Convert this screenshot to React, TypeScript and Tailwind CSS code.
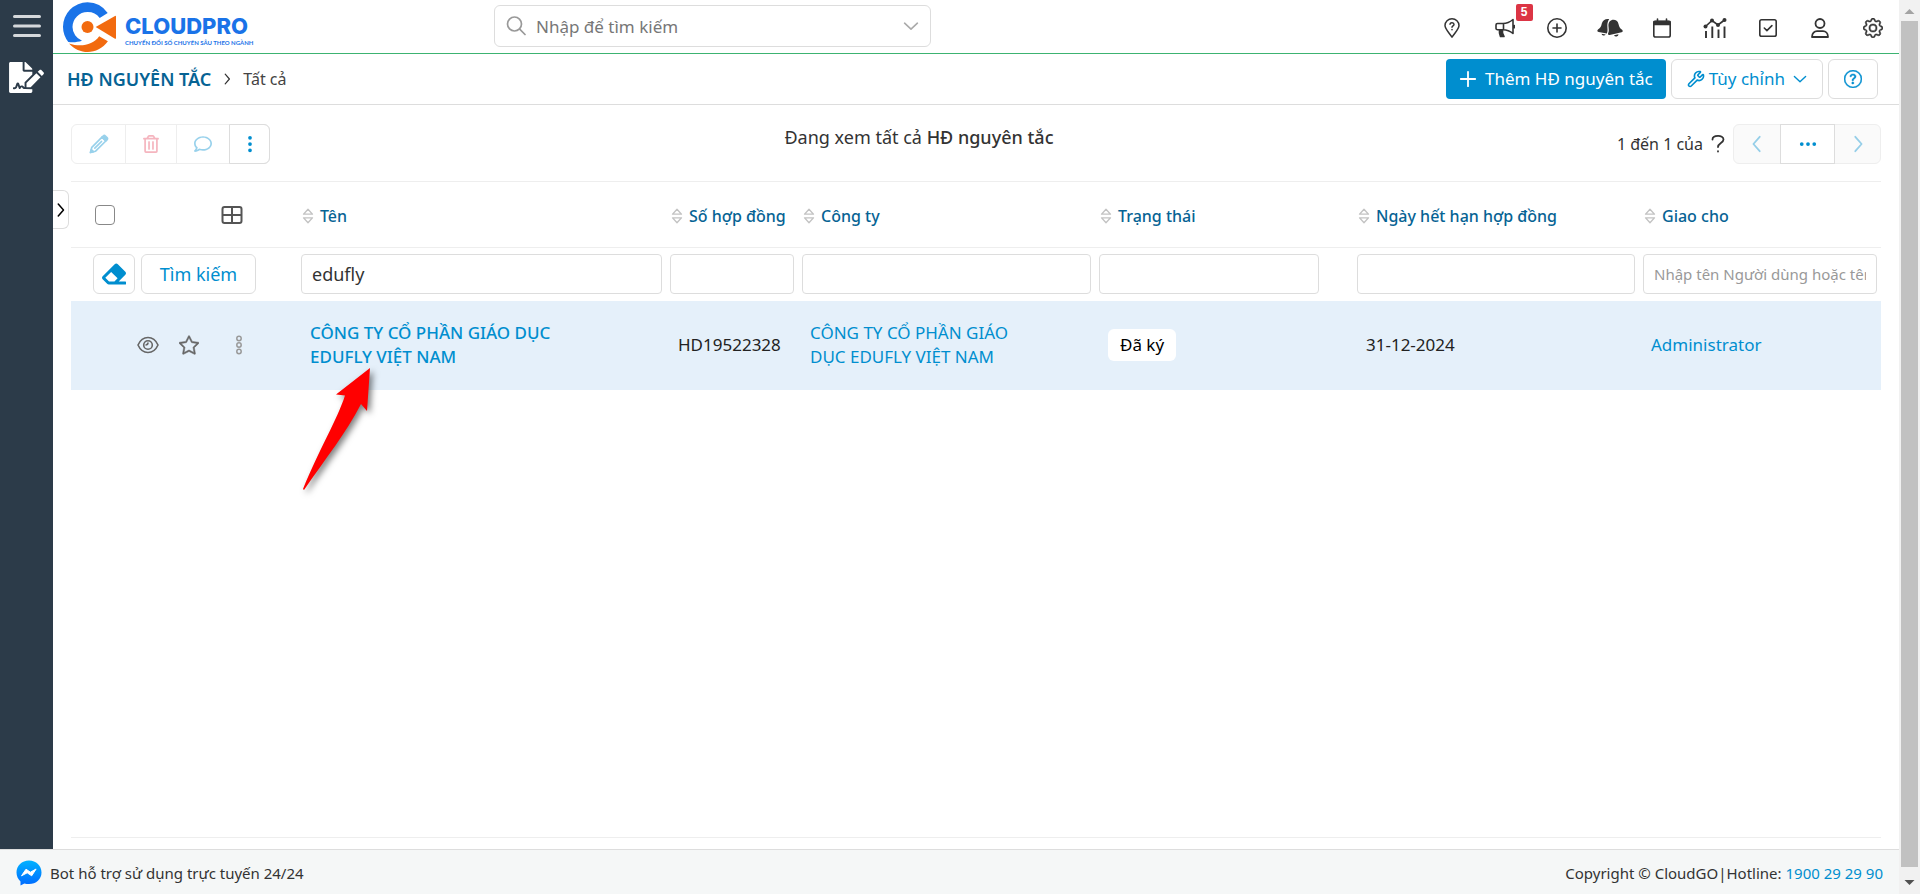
import type { ReactNode } from 'react';
import { Wrench } from 'lucide-react';
import { BsGear, BsQuestionCircle, BsStar, BsThreeDots, BsThreeDotsVertical } from 'react-icons/bs';
import { FaEraser, FaFileSignature, FaRegComment, FaRegTrashAlt } from 'react-icons/fa';

type StrokeIconProps = {
  children: ReactNode;
  className?: string;
  width?: number;
};

function StrokeIcon({ children, className = 'size-5', width = 1.6 }: StrokeIconProps) {
  return (
    <svg
      viewBox="0 0 20 20"
      className={className}
      fill="none"
      stroke="currentColor"
      strokeWidth={width}
      strokeLinecap="round"
      strokeLinejoin="round"
      aria-hidden="true"
    >
      {children}
    </svg>
  );
}

function Chevron({ direction, className = 'size-5' }: { direction: 'left' | 'right' | 'down'; className?: string }) {
  const paths = {
    left: 'M13 2 6 10 13 18',
    right: 'M7 2 14 10 7 18',
    down: 'M2 6.500 10 14 18 6.500',
  };
  return (
    <StrokeIcon className={className} width={2}>
      <path d={paths[direction]} />
    </StrokeIcon>
  );
}

function LogoMark() {
  return (
    <svg viewBox="0 0 54 52" className="h-[52px] w-[54px]" aria-hidden="true">
      <path
        d="M44.700 12A24.700 24.700 0 0 0 24.500 1.200A24.700 24.700 0 0 0 0 26A24.500 24.500 0 0 0 5.300 40.900C10 41.700 14 41.300 19 39.800A15 15 0 0 1 9.500 26A15 15 0 0 1 24.500 11A15 15 0 0 1 36.700 16.900Z"
        fill="#1a73e8"
      />
      <path d="M6 42.500C18 46.500 30 44 36.200 35.200L44.900 40.300C35 54 17 54.500 6 42.500Z" fill="#f26a0f" />
      <circle cx="24.500" cy="26" r="6" fill="#f26a0f" />
      <path d="M32.700 26 52 14.900Q53 14.500 53 15.700V37Q53 38.200 52 37.700Z" fill="#f26a0f" />
    </svg>
  );
}

function PinQuestion() {
  return (
    <StrokeIcon width={1.5}>
      <path d="M10 19.200C7 14.500 3 11 3 7.500a7 6.700 0 0 1 14 0C17 11 13 14.500 10 19.200Z" />
      <path d="M8 6.200c.3-2 4-1.800 4 .2 0 1.400-2 1.500-2 2.800M10 11.500v.2" />
    </StrokeIcon>
  );
}

function Bullhorn() {
  return (
    <StrokeIcon width={1.6}>
      <path d="M18 1.500V15.500C14.500 12.500 11.500 11.700 8 11.700H2.500A1.500 1.500 0 0 1 1 10.200V7A1.500 1.500 0 0 1 2.500 5.500H8C11.500 5.500 14.500 4.500 18 1.500ZM8.500 5.500V11.700M19.300 7.500V9.700" />
      <path d="M4.500 12H7.500V15L9 18.500H5.500L4.500 15Z" fill="currentColor" />
    </StrokeIcon>
  );
}

function CirclePlus() {
  return (
    <StrokeIcon width={1.6}>
      <circle cx="10" cy="10" r="9.200" />
      <path d="M10 6v8M6 10h8" />
    </StrokeIcon>
  );
}

function Bells() {
  return (
    <svg viewBox="0 0 26 20" className="h-5 w-[26px]" fill="currentColor" aria-hidden="true">
      <path d="M12.200 1.100C8.700.4 5.500 2.200 4.800 5.600 4.200 8.500 3.500 9.800 1 11.500c-1.200 1.200-.6 2.400.6 2.600l8.300 1.400C11.800 11 8.500 7 12.200 1.100Z" />
      <path d="M12.600 3.500c2.900-3 8-1.800 8.900 2.400.7 3 1.500 4.300 3.600 5.800 1.100 1.100.7 2.300-.5 2.600L12.700 17c-1.400.2-2.100-1-1.400-2.300 1.600-3.600-1.400-7 1.300-11.200Z" />
      <path d="M4.500 15.800 8.700 16.500A2.300 2.300 0 0 1 4.500 15.800ZM17 17.300 21.500 16.200A2.400 2.400 0 0 1 17 17.300Z" />
    </svg>
  );
}

function Calendar() {
  return (
    <StrokeIcon width={1.6}>
      <rect x="1.800" y="3.200" width="16.400" height="15.800" rx="1.800" />
      <path d="M2 3.500H18V6.500H2ZM5.500 1V3.500M14.500 1V3.500" fill="currentColor" />
    </StrokeIcon>
  );
}

function ChartLine() {
  return (
    <svg viewBox="0 0 24 20" className="h-5 w-6" fill="none" stroke="currentColor" strokeWidth="1.7" aria-hidden="true">
      <path d="m2.500 8.500 6.500-6 6 4.500 6.500-5" />
      <path d="M3 13v7M9.300 8.500V20M15.500 11.500V20M21.500 8.500V20" strokeWidth="1.900" />
      <g fill="currentColor" stroke="none">
        <circle cx="2.500" cy="8.500" r="2" />
        <circle cx="9" cy="2.500" r="2" />
        <circle cx="15" cy="7" r="2" />
        <circle cx="21.500" cy="2" r="2" />
      </g>
    </svg>
  );
}

function SquareCheck() {
  return (
    <StrokeIcon>
      <rect x="1.800" y="1.800" width="16.400" height="16.400" rx="1.800" />
      <path d="m6.300 10 2.600 2.600 5-5" />
    </StrokeIcon>
  );
}

function UserIcon() {
  return (
    <StrokeIcon width={1.8}>
      <circle cx="10" cy="5.500" r="4.500" />
      <path d="M2 19C2 15 4.500 13.200 7 13.200h6c2.500 0 5 1.800 5 5.800Z" />
    </StrokeIcon>
  );
}

function Pencil() {
  return (
    <StrokeIcon width={1.700}>
      <path d="M1.500 18.500 2.800 13.300 13 3.200 16.800 7 6.600 17.200ZM5.800 14.200 12.500 7.500" />
      <path d="m13 3.200 1.200-1.200a1.600 1.600 0 0 1 2.200 0L18 3.600a1.600 1.600 0 0 1 0 2.200L16.800 7Z" fill="currentColor" />
      <path d="M1.500 18.500 2.300 15.500 4.500 17.700Z" fill="currentColor" />
    </StrokeIcon>
  );
}

function GridIcon() {
  return (
    <svg viewBox="0 0 22 20" className="h-5 w-[22px]" fill="none" stroke="currentColor" strokeWidth="2" aria-hidden="true">
      <rect x="1.500" y="2" width="19" height="16" rx="2" />
      <path d="M11 2V18M1.500 10H20.500" />
    </svg>
  );
}

function SortIcon() {
  return (
    <svg viewBox="0 0 12 16" className="h-4 w-3 shrink-0" fill="none" stroke="#c3c3c3" strokeWidth="1.300" strokeLinejoin="round" aria-hidden="true">
      <path d="M1.500 6.200 6 1.300 10.500 6.200ZM1.500 9.800 6 14.700 10.500 9.800Z" />
    </svg>
  );
}

function Eye() {
  return (
    <svg viewBox="0 0 22 18" className="h-[18px] w-[22px]" fill="none" stroke="currentColor" strokeWidth="1.600" aria-hidden="true">
      <path d="M1 9C3 4.500 6.700 1.500 11 1.500S19 4.500 21 9C19 13.500 15.300 16.500 11 16.500S3 13.500 1 9Z" />
      <circle cx="11" cy="9" r="4.300" />
      <path d="M11 6.500A2.500 2.500 0 0 1 8.500 9" />
    </svg>
  );
}

function HollowDots() {
  return (
    <svg viewBox="0 0 8 20" className="h-5 w-2" fill="none" stroke="#999" strokeWidth="1.500" aria-hidden="true">
      <circle cx="4" cy="3.500" r="2.200" />
      <circle cx="4" cy="10" r="2.200" />
      <circle cx="4" cy="16.500" r="2.200" />
    </svg>
  );
}

function Messenger() {
  return (
    <svg viewBox="0 0 26 26" className="size-[26px]" aria-hidden="true">
      <defs>
        <linearGradient id="messenger" x1="0" y1="0" x2="0" y2="1">
          <stop offset="0" stopColor="#00b2ff" />
          <stop offset="1" stopColor="#006aff" />
        </linearGradient>
      </defs>
      <path d="M13 .5C5.800.5.500 5.700.500 12.500c0 3.600 1.500 6.700 4 8.900V25.500l3.900-2.100c1.400.4 3 .7 4.600.7 7.200 0 12.500-5 12.500-11.600S20.200.5 13 .5Z" fill="url(#messenger)" />
      <path d="m5.500 15.800 4.500-6.600 4.400 3 5.700-3.200-4.400 6.800-4.500-3Z" fill="#fff" stroke="#fff" strokeLinejoin="round" />
    </svg>
  );
}

function PointerArrow() {
  return (
    <svg
      viewBox="0 0 80 134"
      className="pointer-events-none absolute top-[65px] left-0 z-10 h-[134px] w-20 drop-shadow-[3px_3px_3px_rgba(0,0,0,0.5)]"
      aria-hidden="true"
    >
      <path d="M73 2 39 28.500 48 29.500C40 54 23 82 6 123L7 124C29 92 49 67 64 38L70 45Z" fill="#f00" />
    </svg>
  );
}

const headerTools = [
  { label: 'Vị trí', icon: <PinQuestion /> },
  { label: 'Thông báo chung', icon: <Bullhorn />, badge: '5' },
  { label: 'Tạo nhanh', icon: <CirclePlus /> },
  { label: 'Chuông báo', icon: <Bells /> },
  { label: 'Lịch', icon: <Calendar /> },
  { label: 'Báo cáo', icon: <ChartLine /> },
  { label: 'Công việc', icon: <SquareCheck /> },
  { label: 'Tài khoản', icon: <UserIcon /> },
  { label: 'Cài đặt', icon: <BsGear className="size-5 stroke-current stroke-[0.4]" /> },
];

const columns = [
  { title: 'Tên', value: 'edufly', input: 'w-full text-lg' },
  { title: 'Số hợp đồng', value: '', input: 'w-full' },
  { title: 'Công ty', value: '', input: 'w-full' },
  { title: 'Trạng thái', value: '', input: 'w-[220px] max-w-full' },
  { title: 'Ngày hết hạn hợp đồng', value: '', input: 'w-full' },
  { title: 'Giao cho', value: '', input: 'w-full text-[15px]', placeholder: 'Nhập tên Người dùng hoặc tên nhóm' },
];

function TopBar() {
  return (
    <header className="flex h-[54px] shrink-0 items-center border-b border-[#3cb371]">
      <a href="#home" className="flex w-[441px] items-center gap-2 pl-[10px]" aria-label="CloudPro">
        <LogoMark />
        <span className="flex flex-col gap-1 pt-2 text-[#1a73e8]">
          <span className="font-[Inter,sans-serif] text-[22px] leading-5 font-extrabold">CLOUDPRO</span>
          <span className="font-[Lato,sans-serif] text-[6px] leading-[6px] font-bold whitespace-nowrap">
            CHUYỂN ĐỔI SỐ CHUYÊN SÂU THEO NGÀNH
          </span>
        </span>
      </a>
      <div className="mb-[2px] flex h-[42px] w-[437px] items-center gap-[10px] rounded-md border border-[#ddd] px-[11px]">
        <StrokeIcon className="size-5 text-[#999]" width={1.700}>
          <circle cx="8.500" cy="8" r="7" />
          <path d="m13.700 13.200 5.300 5.300" />
        </StrokeIcon>
        <input
          type="text"
          aria-label="Tìm kiếm toàn hệ thống"
          placeholder="Nhập để tìm kiếm"
          className="min-w-0 flex-1 pt-[2px] text-[17px] outline-none placeholder:text-[#777]"
        />
        <button type="button" aria-label="Mở rộng tìm kiếm" className="text-[#aaa]">
          <Chevron direction="down" className="size-4" />
        </button>
      </div>
      <nav className="ml-auto grid w-[473px] grid-cols-9 pt-[2px] text-[#333]" aria-label="Công cụ">
        {headerTools.map((tool) => (
          <button key={tool.label} type="button" aria-label={tool.label} className="relative flex h-10 items-center justify-center">
            {tool.icon}
            {tool.badge && (
              <span className="absolute -top-1 left-[37px] flex size-[17px] items-center justify-center rounded-xs bg-[#dc3545] font-[Liberation_Sans,sans-serif] text-xs font-bold text-white">
                {tool.badge}
              </span>
            )}
          </button>
        ))}
      </nav>
    </header>
  );
}

function ModuleBar() {
  return (
    <div className="flex h-[51px] shrink-0 items-center border-b border-[#ddd] pr-[21px] pl-[14px]">
      <nav className="flex items-center gap-[10px]" aria-label="Đường dẫn">
        <a href="#contracts" className="text-lg font-semibold text-[#066394]">HĐ NGUYÊN TẮC</a>
        <Chevron direction="right" className="size-3 text-[#333]" />
        <span className="text-base text-[#444]">Tất cả</span>
      </nav>
      <div className="ml-auto flex gap-[5px] text-[17px] text-[#008ecf]">
        <button type="button" className="flex h-10 items-center gap-2 rounded-sm bg-[#008ecf] px-[13px] text-white">
          <StrokeIcon className="size-[18px]" width={2}>
            <path d="M10 2v16M2 10h16" />
          </StrokeIcon>
          Thêm HĐ nguyên tắc
        </button>
        <button type="button" className="flex h-10 items-center gap-1 rounded-md border border-[#ddd] px-[15px]">
          <Wrench className="size-[18px]" strokeWidth={2.2} />
          Tùy chỉnh
          <Chevron direction="down" className="ml-1 size-[14px]" />
        </button>
        <button type="button" aria-label="Trợ giúp" className="flex h-10 w-[50px] items-center justify-center rounded-md border border-[#ddd]">
          <BsQuestionCircle className="size-[18px] stroke-current stroke-[0.4]" />
        </button>
      </div>
    </div>
  );
}

function ListToolbar() {
  return (
    <div className="flex h-[57px] items-start">
      <div className="flex h-10 w-[199px] rounded-md border border-[#eee] text-[#008ecf]">
        <button type="button" disabled aria-label="Sửa" className="flex w-[54px] items-center justify-center border-r border-[#eee]">
          <span className="opacity-40"><Pencil /></span>
        </button>
        <button type="button" disabled aria-label="Xóa" className="flex w-[51px] items-center justify-center border-r border-[#eee]">
          <FaRegTrashAlt className="size-[18px] text-[#f5b5bf]" />
        </button>
        <button type="button" disabled aria-label="Bình luận" className="flex w-[52px] items-center justify-center">
          <FaRegComment className="size-[18px] opacity-40" />
        </button>
        <button type="button" aria-label="Thêm thao tác" className="-my-px -mr-px flex flex-1 items-center justify-center rounded-r-md border border-[#ddd]">
          <BsThreeDotsVertical className="size-5" />
        </button>
      </div>
      <p className="flex-1 text-center text-lg leading-[26px] text-[#333]">
        Đang xem tất cả <strong className="font-medium">HĐ nguyên tắc</strong>
      </p>
      <div className="flex w-[313px] items-center justify-end text-base text-[#333]">
        <span>1 đến 1 của</span>
        <button type="button" aria-label="Đếm tổng số" className="mx-[5px]">
          <StrokeIcon width={1.8}>
            <path d="M4.500 5.500C4.500 1 15.500.500 15.500 5.500 15.500 9 10 9 10 13M10 17.200v.3" />
          </StrokeIcon>
        </button>
        <div className="flex h-10 rounded-md border border-[#eee] bg-[#fafafa] text-[#008ecf]">
          <button type="button" disabled aria-label="Trang trước" className="flex w-[46px] items-center justify-center">
            <Chevron direction="left" className="size-[18px] opacity-40" />
          </button>
          <button type="button" aria-label="Chọn trang" className="-my-px flex w-[55px] items-center justify-center border border-[#ddd] bg-white">
            <BsThreeDots className="size-5" />
          </button>
          <button type="button" disabled aria-label="Trang sau" className="flex w-[45px] items-center justify-center">
            <Chevron direction="right" className="size-[18px] opacity-40" />
          </button>
        </div>
      </div>
    </div>
  );
}

function ContractTable() {
  return (
    <table className="w-full table-fixed border-collapse text-left">
      <colgroup>
        <col className="w-[226px]" />
        <col className="w-[369px]" />
        <col className="w-[132px]" />
        <col className="w-[297px]" />
        <col className="w-[258px]" />
        <col className="w-[286px]" />
        <col className="w-[242px]" />
      </colgroup>
      <thead>
        <tr className="h-[66px] border-y border-[#eee]">
          <th className="pl-6">
            <div className="flex items-center">
              <input type="checkbox" aria-label="Chọn tất cả" className="size-5 appearance-none rounded-sm border border-[#888] bg-white" />
              <button type="button" aria-label="Chọn cột" className="ml-[106px] text-[#555]">
                <GridIcon />
              </button>
            </div>
          </th>
          {columns.map((column) => (
            <th key={column.title} scope="col" className="pt-[3px] pl-[5px] font-medium">
              <button type="button" className="flex items-center gap-[6px] text-base whitespace-nowrap text-[#066394]">
                <SortIcon />
                {column.title}
              </button>
            </th>
          ))}
        </tr>
        <tr className="h-[53px]">
          <td className="pl-[22px]">
            <div className="flex gap-[6px] text-[#008ecf]">
              <button type="button" aria-label="Xóa bộ lọc" className="flex h-10 w-[42px] items-center justify-center rounded-md border border-[#ddd]">
                <FaEraser className="size-6" />
              </button>
              <button type="button" className="h-10 w-[115px] rounded-md border border-[#ddd] text-lg">Tìm kiếm</button>
            </div>
          </td>
          {columns.map((column) => (
            <td key={column.title} className="px-1">
              <input
                type="text"
                aria-label={`Lọc theo ${column.title}`}
                defaultValue={column.value}
                placeholder={column.placeholder}
                className={`block h-10 rounded-sm border border-[#ddd] px-[10px] text-[#333] outline-none placeholder:text-[#999] ${column.input}`}
              />
            </td>
          ))}
        </tr>
      </thead>
      <tbody>
        <tr className="h-[89px] bg-[#e5f0fa] text-[17px] leading-6 text-[#222]">
          <td className="pl-[66px]">
            <div className="flex items-center text-[#666]">
              <button type="button" aria-label="Xem nhanh"><Eye /></button>
              <button type="button" aria-label="Đánh dấu sao" className="ml-5"><BsStar className="size-5 stroke-current stroke-[0.4]" /></button>
              <button type="button" aria-label="Thao tác khác" className="ml-9"><HollowDots /></button>
            </div>
          </td>
          <td className="relative px-[13px]">
            <a href="#contract" className="block max-w-[270px] font-medium text-[#008ecf]">CÔNG TY CỔ PHẦN GIÁO DỤC EDUFLY VIỆT NAM</a>
            <PointerArrow />
          </td>
          <td className="pl-3">HD19522328</td>
          <td className="px-3">
            <a href="#company" className="block max-w-[220px] text-[#008ecf]">CÔNG TY CỔ PHẦN GIÁO DỤC EDUFLY VIỆT NAM</a>
          </td>
          <td className="pl-[13px]">
            <span className="inline-block rounded-md bg-white px-3 py-1 text-black">Đã ký</span>
          </td>
          <td className="pl-[13px]">31-12-2024</td>
          <td className="pl-3">
            <a href="#administrator" className="text-[#008ecf]">Administrator</a>
          </td>
        </tr>
      </tbody>
    </table>
  );
}

function PageFooter() {
  return (
    <footer className="flex h-[45px] shrink-0 items-center justify-between border-t border-[#ddd] bg-[#f5f7f7] pt-[2px] pr-4 pl-4 text-[15px] text-[#333]">
      <a href="#bot" className="flex items-center gap-2">
        <Messenger />
        Bot hỗ trợ sử dụng trực tuyến 24/24
      </a>
      <p>
        Copyright © CloudGO|Hotline: <a href="tel:1900292990" className="text-[#008ecf]">1900 29 29 90</a>
      </p>
    </footer>
  );
}

function ScrollRail() {
  return (
    <div className="flex w-[21px] shrink-0 flex-col items-center bg-[#f1f1f1] pr-px" aria-hidden="true">
      <svg viewBox="0 0 21 21" className="size-[21px]"><path d="M5.500 14 10.500 9 15.500 14Z" fill="#a3a3a3" /></svg>
      <div className="w-[17px] flex-1 bg-[#c1c1c1]" />
      <svg viewBox="0 0 21 27" className="h-[27px] w-[21px]"><path d="M5.500 13 10.500 18 15.500 13Z" fill="#505050" /></svg>
    </div>
  );
}

export default function App() {
  return (
    <div className="flex min-h-screen bg-white font-[Noto_Sans,sans-serif]">
      <div className="flex min-w-0 flex-1 flex-col">
        <div className="flex flex-1">
          <aside className="flex w-[53px] shrink-0 flex-col items-center bg-[#2c3b49] text-white">
            <button type="button" aria-label="Mở menu" className="flex h-[52px] items-center">
              <svg viewBox="0 0 28 24" className="h-6 w-7" stroke="#d5d8db" strokeWidth="3" strokeLinecap="round" aria-hidden="true">
                <path d="M1.500 2.500h25M1.500 12h25M1.500 21.500h25" />
              </svg>
            </button>
            <a href="#contracts" aria-label="HĐ nguyên tắc" className="flex h-[50px] items-center">
              <FaFileSignature className="h-[31px] w-[35px]" />
            </a>
          </aside>
          <div className="flex min-w-0 flex-1 flex-col">
            <TopBar />
            <ModuleBar />
            <main className="relative flex flex-1 flex-col pt-[19px] pr-[18px] pb-[11px] pl-[18px]">
              <button
                type="button"
                aria-label="Mở bộ lọc"
                className="absolute top-[85px] left-0 flex h-[39px] w-4 items-center justify-center rounded-r-md border border-l-0 border-[#ddd] text-black"
              >
                <Chevron direction="right" className="size-4" />
              </button>
              <ListToolbar />
              <div className="flex-1 border-b border-[#eee]">
                <ContractTable />
              </div>
            </main>
          </div>
        </div>
        <PageFooter />
      </div>
      <ScrollRail />
    </div>
  );
}
